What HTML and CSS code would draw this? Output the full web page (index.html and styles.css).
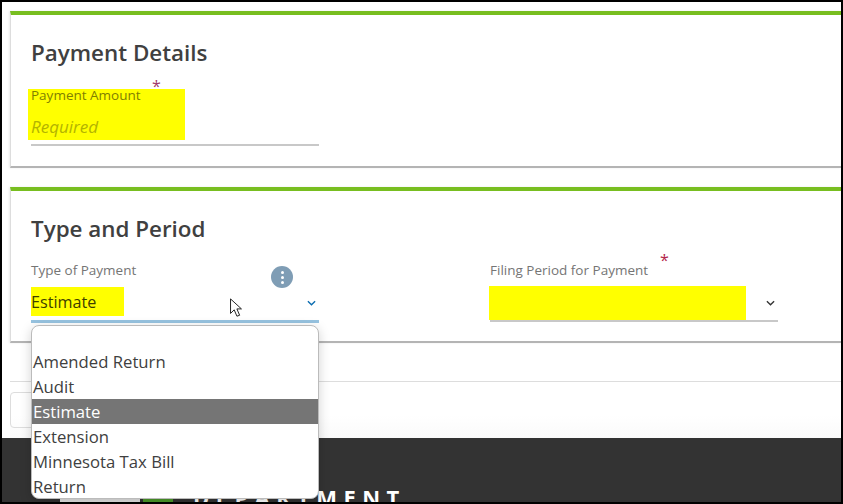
FILE: index.html
```html
<!DOCTYPE html>
<html lang="en">
<head>
<meta charset="UTF-8" />
<title>Payment Details</title>
<link rel="stylesheet" href="styles.css">
</head>
<body>
<div class="frame">

  <!-- Payment Details -->
  <section class="card card-details">
    <h2>Payment Details</h2>
    <div class="field field-amount">
      <div class="amount-mark">
        <label>Payment Amount</label>
        <span class="placeholder">Required</span>
      </div>
      <span class="star star-amount">*</span>
    </div>
  </section>

  <!-- Type and Period -->
  <section class="card card-type">
    <h2>Type and Period</h2>
    <div class="field-row">
      <div class="field field-select active">
        <label>Type of Payment</label>
        <div class="select-box">
          <span class="select-mark">Estimate</span>
          <svg class="chev blue" viewBox="0 0 10 6"><path d="M1 1l4 4 4-4" /></svg>
        </div>
        <span class="more-btn"><i></i><i></i><i></i></span>
        <svg class="cursor" viewBox="0 0 14 22">
          <path d="M1 1v16l4-4 3 7 3-1-3-7h5z" />
        </svg>
        <ul class="listbox">
          <li>&nbsp;</li>
          <li>Amended Return</li>
          <li>Audit</li>
          <li class="selected">Estimate</li>
          <li>Extension</li>
          <li>Minnesota Tax Bill</li>
          <li>Return</li>
        </ul>
      </div>
      <div class="field field-select field-period">
        <label>Filing Period for Payment</label>
        <span class="star star-period">*</span>
        <div class="select-box">
          <span class="select-mark empty"></span>
          <svg class="chev" viewBox="0 0 10 6"><path d="M1 1l4 4 4-4" /></svg>
        </div>
      </div>
    </div>
  </section>

  <!-- Buttons row -->
  <div class="actions">
    <div class="back-btn"></div>
  </div>

  <!-- Footer -->
  <footer>
    <div class="logo-white"></div>
    <div class="logo-green"></div>
    <span class="dept">DEPARTMENT</span>
  </footer>

</div>
</body>
</html>
```

FILE: styles.css
```css
* {margin:0; padding:0; box-sizing:border-box;}
body, html {
  height: 100%;
  background: #fff;
  font-family: 'Open Sans', 'Noto Sans', sans-serif;
  overflow: hidden;
}

.frame {
  width: 843px;
  height: 504px;
  border: 2px solid #000;
  padding-top: 9px;
  background: #fff;
  overflow: hidden;
  display: flex;
  flex-direction: column;
}

/* Cards */
.card {
  margin-left: 8px;
  border-top: 4px solid #78be20;
  border-left: 1px solid #ddd;
  border-bottom: 2px solid #b4b4b4;
  background: #fff;
  padding: 0 0 0 20px;
  box-shadow: -1px 0 2px rgba(0,0,0,0.08);
}
.card h2 {
  font-size: 22.4px;
  line-height: 30px;
  font-weight: 600;
  color: #404040;
}
.card-details {
  height: 157px;
  padding-top: 23px;
}
.card-type {
  height: 156px;
  margin-top: 19px;
  padding-top: 23px;
}

/* Fields */
.field {
  position: relative;
  width: 288px;
}
.field label {
  display: block;
  color: #757575;
  font-size: 13.5px;
  line-height: 17px;
}
.field-amount {
  margin-top: 21px;
  height: 57px;
  border-bottom: 2px solid #c8c8c8;
}
.amount-mark {
  width: 157px;
  height: 51px;
  margin-left: -3px;
  padding: 0 0 0 3px;
  background: #ff0;
  display: flex;
  flex-direction: column;
}
.amount-mark label {
  color: #7f7f00;
  line-height: 13px;
}
.placeholder {
  margin-top: 13px;
  font-size: 17px;
  line-height: 24px;
  font-style: italic;
  color: #b3b300;
}
.star {
  position: absolute;
  color: #a23a6a;
  font-size: 16px;
  line-height: 20px;
}
.star-amount {
  left: 121px;
  top: -13px;
}

/* Selects */
.field-row {
  display: flex;
  gap: 171px;
  margin-top: 18px;
}
.select-box {
  display: flex;
  align-items: flex-end;
  justify-content: space-between;
  height: 43px;
  border-bottom: 2px solid #c8c8c8;
  padding: 0 3px 4px 0;
}
.field-select.active .select-box {
  border-bottom: 3px solid #97c3e0;
  height: 45px;
  margin-top: -1px;
}
.select-mark {
  display: block;
  width: 93px;
  height: 29px;
  background: #ff0;
  font-size: 16.2px;
  line-height: 30px;
  color: #3f3f00;
}
.select-mark.empty {
  width: 257px;
  height: 34px;
  margin: 0 0 -4px -1px;
}
.chev {
  width: 9px;
  height: 6px;
  margin-bottom: 10px;
  fill: none;
  stroke: #333;
  stroke-width: 1.5;
}
.chev.blue {
  stroke: #0a6cb0;
}
.star-period {
  left: 170px;
  top: -12px;
  color: #b3264a;
}

.more-btn {
  position: absolute;
  left: 240px;
  top: 4px;
  width: 22px;
  height: 22px;
  border-radius: 50%;
  background: #7f9db5;
  display: flex;
  flex-direction: column;
  align-items: center;
  justify-content: center;
  gap: 2px;
}
.more-btn i {
  width: 3px;
  height: 3px;
  border-radius: 50%;
  background: #fff;
}
.cursor {
  position: absolute;
  left: 198px;
  top: 36px;
  width: 14px;
  height: 20px;
  fill: #fff;
  stroke: #111;
  stroke-width: 1;
}

/* Dropdown list */
.listbox {
  position: absolute;
  left: 0;
  top: 63px;
  width: 288px;
  height: 174px;
  list-style: none;
  background: #fff;
  border: 1px solid #bbb;
  border-radius: 8px;
  overflow: hidden;
  box-shadow: 0 3px 12px rgba(0,0,0,0.18);
  z-index: 10;
  padding-top: 12px;
}
.listbox li {
  height: 25px;
  line-height: 25px;
  font-size: 16.7px;
  color: #404040;
  padding-left: 1px;
}
.listbox li:first-child {
  height: 11px;
  line-height: 11px;
}
.listbox li.selected {
  background: #757575;
  color: #fff;
}

/* Bottom actions */
.actions {
  margin: 38px 0 0 8px;
  border-top: 1px solid #ddd;
  padding-top: 10px;
  height: 57px;
  background: linear-gradient(to bottom, #fff 60%, #fafafa);
}
.back-btn {
  width: 120px;
  height: 36px;
  border: 1px solid #ddd;
  border-radius: 4px;
}

/* Footer */
footer {
  flex: 1;
  background: #333;
  position: relative;
  overflow: hidden;
}
.dept {
  position: absolute;
  left: 191px;
  top: 44px;
  color: #fff;
  font-weight: 700;
  font-size: 22px;
  line-height: 30px;
  letter-spacing: 6.4px;
}
.logo-white {
  position: absolute;
  left: 58px;
  bottom: 0;
  width: 80px;
  height: 4px;
  background: #e2e2e2;
}
.logo-green {
  position: absolute;
  left: 141px;
  bottom: 0;
  width: 30px;
  height: 4px;
  background: #4c9a2a;
}
```
